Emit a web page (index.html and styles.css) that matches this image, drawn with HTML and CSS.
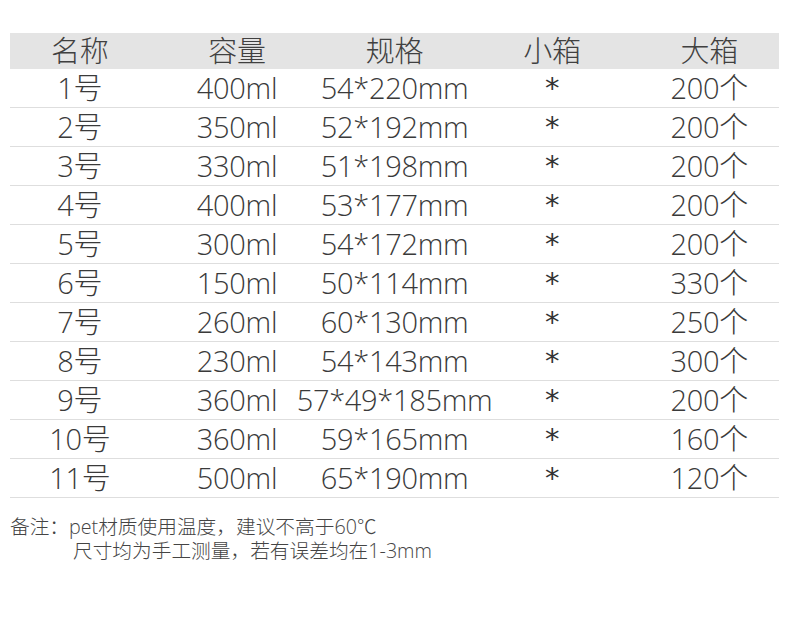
FILE: index.html
```html
<!DOCTYPE html>
<html lang="zh">
<head>
<meta charset="utf-8">
<link rel="stylesheet" href="styles.css">
</head>
<body>
<div class="table">
  <div class="row head"><div class="c">名称</div><div class="c">容量</div><div class="c">规格</div><div class="c">小箱</div><div class="c">大箱</div></div>
  <div class="row"><div class="c">1号</div><div class="c">400ml</div><div class="c">54*220mm</div><div class="c star">*</div><div class="c">200个</div></div>
  <div class="row"><div class="c">2号</div><div class="c">350ml</div><div class="c">52*192mm</div><div class="c star">*</div><div class="c">200个</div></div>
  <div class="row"><div class="c">3号</div><div class="c">330ml</div><div class="c">51*198mm</div><div class="c star">*</div><div class="c">200个</div></div>
  <div class="row"><div class="c">4号</div><div class="c">400ml</div><div class="c">53*177mm</div><div class="c star">*</div><div class="c">200个</div></div>
  <div class="row"><div class="c">5号</div><div class="c">300ml</div><div class="c">54*172mm</div><div class="c star">*</div><div class="c">200个</div></div>
  <div class="row"><div class="c">6号</div><div class="c">150ml</div><div class="c">50*114mm</div><div class="c star">*</div><div class="c">330个</div></div>
  <div class="row"><div class="c">7号</div><div class="c">260ml</div><div class="c">60*130mm</div><div class="c star">*</div><div class="c">250个</div></div>
  <div class="row"><div class="c">8号</div><div class="c">230ml</div><div class="c">54*143mm</div><div class="c star">*</div><div class="c">300个</div></div>
  <div class="row"><div class="c">9号</div><div class="c">360ml</div><div class="c">57*49*185mm</div><div class="c star">*</div><div class="c">200个</div></div>
  <div class="row"><div class="c">10号</div><div class="c">360ml</div><div class="c">59*165mm</div><div class="c star">*</div><div class="c">160个</div></div>
  <div class="row"><div class="c">11号</div><div class="c">500ml</div><div class="c">65*190mm</div><div class="c star">*</div><div class="c">120个</div></div>
</div>
<div class="note">
  <div class="line">备注：pet材质使用温度，建议不高于60℃</div>
  <div class="line indent">尺寸均为手工测量，若有误差均在1-3mm</div>
</div>
</body>
</html>
```
FILE: styles.css
```css
html, body {
  margin: 0;
  padding: 0;
  background: #ffffff;
}
body {
  font-family: "Open Sans", "Noto Sans CJK SC", sans-serif;
  color: #3a3a3a;
}
.table {
  margin: 33px 0 0 10px;
  width: 769px;
}
.row {
  display: grid;
  grid-template-columns: 148.25px 157.5px 157.5px 157.5px 148.25px;
  height: 38px;
  border-bottom: 1px solid #dedede;
  font-size: 29px;
  font-weight: 300;
  line-height: 38px;
  letter-spacing: -0.3px;
}
.row.head {
  height: 36px;
  line-height: 36px;
  background: #e4e4e4;
  border-bottom: none;
  color: #404040;
}
.c {
  display: flex;
  justify-content: center;
  white-space: nowrap;
}
.c:first-child {
  padding-right: 8.75px;
}
.c:last-child {
  padding-left: 8.75px;
}
.star {
  font-family: "DejaVu Sans", sans-serif;
  font-weight: 400;
  font-size: 29px;
  color: #333333;
}
.note {
  margin: 17px 0 0 10px;
  font-size: 19.7px;
  line-height: 24px;
  color: #444444;
  font-weight: 300;
}
.indent {
  padding-left: 63px;
}
```
